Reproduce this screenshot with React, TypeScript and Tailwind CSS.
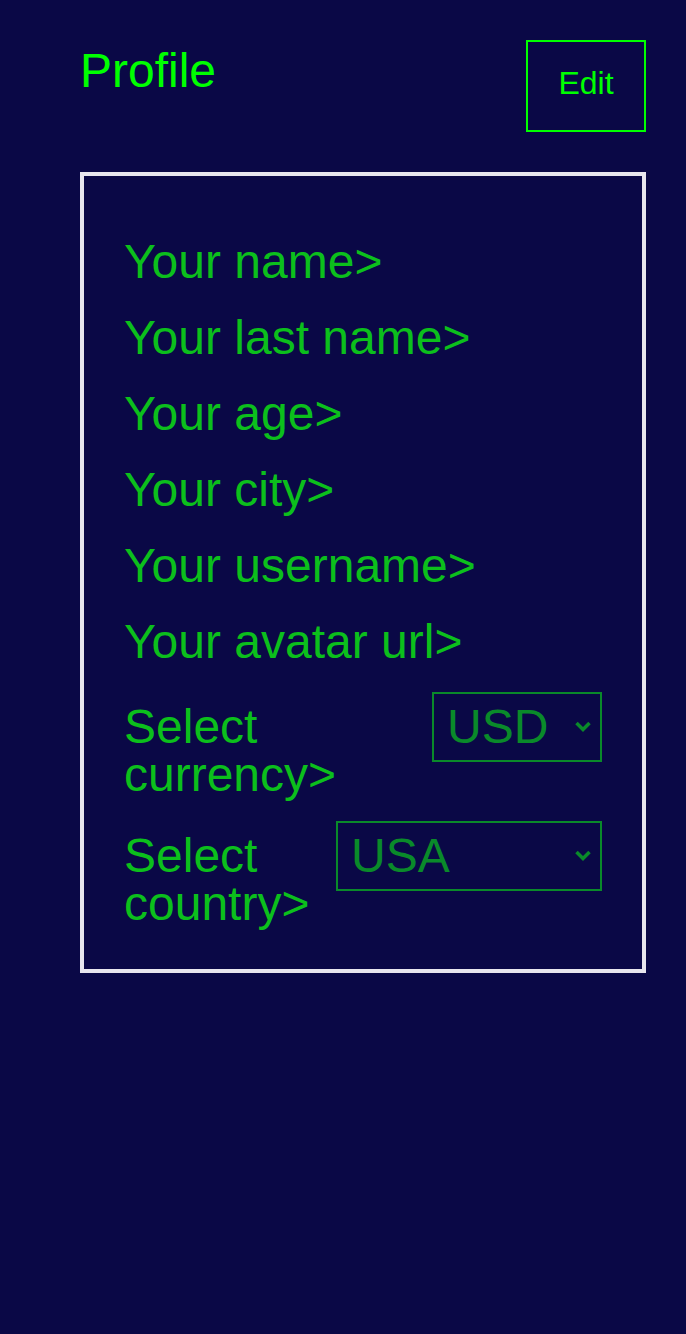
import React from 'react';

const fields = [
  'Your name>',
  'Your last name>',
  'Your age>',
  'Your city>',
  'Your username>',
  'Your avatar url>',
];

const Chevron: React.FC = () => (
  <svg
    className="pointer-events-none absolute right-[10px] top-[28px] h-[14px] w-[18px]"
    viewBox="0 0 18 14"
    fill="none"
  >
    <path d="M2.5 3 L9 9.5 L15.5 3" stroke="#0a8a2a" strokeWidth="3.5" />
  </svg>
);

/**
 * Select rendered with a flat green border and a small chevron.
 */
const GreenSelect: React.FC<{ value: string; options: string[]; width: string }> = ({
  value,
  options,
  width,
}) => (
  <div className={`relative shrink-0 ${width}`}>
    <select
      defaultValue={value}
      className="block h-[70px] w-full appearance-none border-2 border-[#0a8a2a] bg-[#0a0846] pl-[13px] pr-10 text-[48px] leading-none text-[#0a8a2a] outline-none"
    >
      {options.map((o) => (
        <option key={o} value={o}>
          {o}
        </option>
      ))}
    </select>
    <Chevron />
  </div>
);

const App: React.FC = () => {
  return (
    <div
      className="min-h-[1334px] w-full bg-[#0a0846] pl-20 pr-10 pt-10"
      style={{ fontFamily: '"Liberation Sans", Arial, sans-serif' }}
    >
      {/* Header */}
      <div className="flex items-start justify-between">
        <h1 className="mt-[3px] text-[48px] font-normal leading-[55px] text-[#00ff00]">Profile</h1>
        <button className="flex h-[92px] w-[120px] items-center justify-center border-2 border-[#00ff00] pb-[6px] text-[32px] leading-none text-[#00ff00]">
          Edit
        </button>
      </div>

      {/* Profile card */}
      <div className="mt-10 border-4 border-[#e8e6ee] px-10 pb-[41px] pt-[62px]">
        <div className="flex flex-col gap-[28px]">
          {fields.map((f) => (
            <div key={f} className="text-[48px] leading-[48px] text-[#0cbf1c]">
              {f}
            </div>
          ))}
        </div>

        <div className="mt-[26px] flex items-baseline justify-between gap-4">
          <div className="text-[48px] leading-[48px] text-[#0cbf1c]">
            Select
            <br />
            currency&gt;
          </div>
          <GreenSelect value="USD" options={['USD', 'EUR', 'GBP']} width="w-[170px]" />
        </div>

        <div className="mt-[22px] flex items-baseline justify-between gap-4">
          <div className="text-[48px] leading-[48px] text-[#0cbf1c]">
            Select
            <br />
            country&gt;
          </div>
          <GreenSelect value="USA" options={['USA', 'Germany', 'France']} width="w-[266px]" />
        </div>
      </div>
    </div>
  );
};

export default App;
